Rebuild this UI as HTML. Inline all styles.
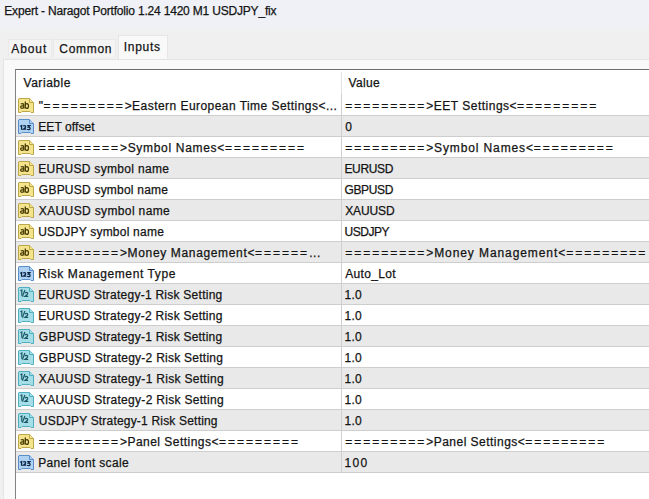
<!DOCTYPE html>
<html><head><meta charset="utf-8"><style>
*{margin:0;padding:0;box-sizing:border-box}
html,body{width:649px;height:499px;overflow:hidden;background:#f0f0f0;font-family:"Liberation Sans",sans-serif;font-size:12px;color:#141414}
.abs{position:absolute}
#title{left:0;top:0;width:649px;height:31px;background:linear-gradient(#eff1f6 0px,#eff1f6 24px,#f1f1f1 31px)}
.tab{position:absolute;top:39px;height:18px;background:#f4f4f4;border:1px solid #e9e9e9;border-bottom:none}
#panel{left:3px;top:59px;width:700px;height:500px;background:#f9f9f9;border:1px solid #e4e4e4}
#inputs{left:118px;top:35px;width:50px;height:24px;background:#f9f9f9;border:1px solid #e6e6e6;border-bottom:none}
#list{left:15px;top:69px;width:700px;height:500px;background:#ffffff;border-left:1px solid #828282;border-top:1px solid #6e6e6e}
.row{position:absolute;left:16px;width:640px;height:22px;background:#e9e9e9;border-top:1px solid #cecece;border-bottom:1px solid #cecece}
.t{position:absolute;line-height:14px;white-space:nowrap;-webkit-text-stroke:0.25px #141414}
.ic{position:absolute;left:18px}
e{letter-spacing:2.000px}
#div{left:341px;width:1px;background:#cfcfcf}
#hdiv{left:341px;top:72px;width:1px;height:22px;background:#e2e2e2}
</style></head><body>
<div id="title" class="abs"></div>
<div class="tab" style="left:8px;width:44px"></div>
<div class="tab" style="left:53px;width:63px"></div>
<div id="panel" class="abs"></div>
<div id="inputs" class="abs"></div>
<div id="list" class="abs"></div>
<span class="t" style="left:4.30px;top:4px;letter-spacing:-0.189px">Expert - Naragot Portfolio 1.24 1420 M1 USDJPY_fix</span>
<span class="t" style="left:11.35px;top:42px;letter-spacing:0.880px">About</span>
<span class="t" style="left:59.28px;top:42px;letter-spacing:0.720px">Common</span>
<span class="t" style="left:123.65px;top:40px;letter-spacing:0.752px">Inputs</span>
<span class="t" style="left:23.49px;top:76px;letter-spacing:0.549px">Variable</span>
<span class="t" style="left:348.49px;top:76px;letter-spacing:0.320px">Value</span>
<svg class="ic" style="top:98px" width="16" height="16" viewBox="0 0 16 16"><path d="M1 0.5H11.5L15.5 4.5V14.5H13L12 13.5H4L3 14.5H0.5V1Z" fill="#f4e48c" stroke="#bda64a"/><path d="M11.5 0.5V4.5H15.5" fill="#f4e48c" stroke="#bda64a"/><g fill="none" stroke="#463900" stroke-width="1.25"><path d="M2.9 6.1Q3.4 5.5 4.4 5.5Q5.8 5.5 5.8 6.9V10.4M5.8 7.9H4.2Q2.6 7.9 2.6 9.1Q2.6 10.3 3.9 10.3Q5.2 10.3 5.8 9.3"/><path d="M7.3 3.6V10.4M7.3 7.2Q7.7 5.5 8.9 5.5Q10.5 5.5 10.5 7.95Q10.5 10.4 8.9 10.4Q7.7 10.4 7.3 8.8"/></g></svg>
<span class="t" style="left:38.86px;top:99px;letter-spacing:0.452px">&quot;<e>=========</e>&gt;Eastern European Time Settings&lt;...</span>
<span class="t" style="left:345.16px;top:99px;letter-spacing:0.501px"><e>=========</e>&gt;EET Settings&lt;<e>=========</e></span>
<div class="row" style="top:115px"></div>
<svg class="ic" style="top:119px" width="16" height="16" viewBox="0 0 16 16"><path d="M1 0.5H11.5L15.5 4.5V14.5H13L12 13.5H4L3 14.5H0.5V1Z" fill="#b0d2f2" stroke="#5a8ecb"/><path d="M11.5 0.5V4.5H15.5" fill="#b0d2f2" stroke="#5a8ecb"/><g fill="none" stroke="#0a2646" stroke-width="1.3"><path d="M2.3 7.4L3.6 6.7V10.8"/><path d="M5.2 7.3Q5.6 6.6 6.5 6.6Q7.7 6.6 7.7 7.7Q7.7 8.6 5.3 10.2H8.2"/><path d="M9.1 6.7H11.8L10.4 8.2Q12.1 8.2 12.1 9.4Q12.1 10.6 10.6 10.6Q9.6 10.6 9.1 10.1"/></g></svg>
<span class="t" style="left:38.16px;top:120px;letter-spacing:0.107px">EET offset</span>
<span class="t" style="left:345.16px;top:120px;letter-spacing:-5.040px">0</span>
<svg class="ic" style="top:140px" width="16" height="16" viewBox="0 0 16 16"><path d="M1 0.5H11.5L15.5 4.5V14.5H13L12 13.5H4L3 14.5H0.5V1Z" fill="#f4e48c" stroke="#bda64a"/><path d="M11.5 0.5V4.5H15.5" fill="#f4e48c" stroke="#bda64a"/><g fill="none" stroke="#463900" stroke-width="1.25"><path d="M2.9 6.1Q3.4 5.5 4.4 5.5Q5.8 5.5 5.8 6.9V10.4M5.8 7.9H4.2Q2.6 7.9 2.6 9.1Q2.6 10.3 3.9 10.3Q5.2 10.3 5.8 9.3"/><path d="M7.3 3.6V10.4M7.3 7.2Q7.7 5.5 8.9 5.5Q10.5 5.5 10.5 7.95Q10.5 10.4 8.9 10.4Q7.7 10.4 7.3 8.8"/></g></svg>
<span class="t" style="left:38.86px;top:141px;letter-spacing:0.692px"><e>=========</e>&gt;Symbol Names&lt;<e>=========</e></span>
<span class="t" style="left:345.16px;top:141px;letter-spacing:0.870px"><e>=========</e>&gt;Symbol Names&lt;<e>=========</e></span>
<div class="row" style="top:157px"></div>
<svg class="ic" style="top:161px" width="16" height="16" viewBox="0 0 16 16"><path d="M1 0.5H11.5L15.5 4.5V14.5H13L12 13.5H4L3 14.5H0.5V1Z" fill="#f4e48c" stroke="#bda64a"/><path d="M11.5 0.5V4.5H15.5" fill="#f4e48c" stroke="#bda64a"/><g fill="none" stroke="#463900" stroke-width="1.25"><path d="M2.9 6.1Q3.4 5.5 4.4 5.5Q5.8 5.5 5.8 6.9V10.4M5.8 7.9H4.2Q2.6 7.9 2.6 9.1Q2.6 10.3 3.9 10.3Q5.2 10.3 5.8 9.3"/><path d="M7.3 3.6V10.4M7.3 7.2Q7.7 5.5 8.9 5.5Q10.5 5.5 10.5 7.95Q10.5 10.4 8.9 10.4Q7.7 10.4 7.3 8.8"/></g></svg>
<span class="t" style="left:38.16px;top:162px;letter-spacing:0.315px">EURUSD symbol name</span>
<span class="t" style="left:344.46px;top:162px;letter-spacing:-0.336px">EURUSD</span>
<svg class="ic" style="top:182px" width="16" height="16" viewBox="0 0 16 16"><path d="M1 0.5H11.5L15.5 4.5V14.5H13L12 13.5H4L3 14.5H0.5V1Z" fill="#f4e48c" stroke="#bda64a"/><path d="M11.5 0.5V4.5H15.5" fill="#f4e48c" stroke="#bda64a"/><g fill="none" stroke="#463900" stroke-width="1.25"><path d="M2.9 6.1Q3.4 5.5 4.4 5.5Q5.8 5.5 5.8 6.9V10.4M5.8 7.9H4.2Q2.6 7.9 2.6 9.1Q2.6 10.3 3.9 10.3Q5.2 10.3 5.8 9.3"/><path d="M7.3 3.6V10.4M7.3 7.2Q7.7 5.5 8.9 5.5Q10.5 5.5 10.5 7.95Q10.5 10.4 8.9 10.4Q7.7 10.4 7.3 8.8"/></g></svg>
<span class="t" style="left:38.86px;top:183px;letter-spacing:0.221px">GBPUSD symbol name</span>
<span class="t" style="left:344.46px;top:183px;letter-spacing:-0.336px">GBPUSD</span>
<div class="row" style="top:199px"></div>
<svg class="ic" style="top:203px" width="16" height="16" viewBox="0 0 16 16"><path d="M1 0.5H11.5L15.5 4.5V14.5H13L12 13.5H4L3 14.5H0.5V1Z" fill="#f4e48c" stroke="#bda64a"/><path d="M11.5 0.5V4.5H15.5" fill="#f4e48c" stroke="#bda64a"/><g fill="none" stroke="#463900" stroke-width="1.25"><path d="M2.9 6.1Q3.4 5.5 4.4 5.5Q5.8 5.5 5.8 6.9V10.4M5.8 7.9H4.2Q2.6 7.9 2.6 9.1Q2.6 10.3 3.9 10.3Q5.2 10.3 5.8 9.3"/><path d="M7.3 3.6V10.4M7.3 7.2Q7.7 5.5 8.9 5.5Q10.5 5.5 10.5 7.95Q10.5 10.4 8.9 10.4Q7.7 10.4 7.3 8.8"/></g></svg>
<span class="t" style="left:38.86px;top:204px;letter-spacing:0.362px">XAUUSD symbol name</span>
<span class="t" style="left:345.16px;top:204px;letter-spacing:-0.096px">XAUUSD</span>
<svg class="ic" style="top:224px" width="16" height="16" viewBox="0 0 16 16"><path d="M1 0.5H11.5L15.5 4.5V14.5H13L12 13.5H4L3 14.5H0.5V1Z" fill="#f4e48c" stroke="#bda64a"/><path d="M11.5 0.5V4.5H15.5" fill="#f4e48c" stroke="#bda64a"/><g fill="none" stroke="#463900" stroke-width="1.25"><path d="M2.9 6.1Q3.4 5.5 4.4 5.5Q5.8 5.5 5.8 6.9V10.4M5.8 7.9H4.2Q2.6 7.9 2.6 9.1Q2.6 10.3 3.9 10.3Q5.2 10.3 5.8 9.3"/><path d="M7.3 3.6V10.4M7.3 7.2Q7.7 5.5 8.9 5.5Q10.5 5.5 10.5 7.95Q10.5 10.4 8.9 10.4Q7.7 10.4 7.3 8.8"/></g></svg>
<span class="t" style="left:38.16px;top:225px;letter-spacing:0.226px">USDJPY symbol name</span>
<span class="t" style="left:344.46px;top:225px;letter-spacing:-0.448px">USDJPY</span>
<div class="row" style="top:241px"></div>
<svg class="ic" style="top:245px" width="16" height="16" viewBox="0 0 16 16"><path d="M1 0.5H11.5L15.5 4.5V14.5H13L12 13.5H4L3 14.5H0.5V1Z" fill="#f4e48c" stroke="#bda64a"/><path d="M11.5 0.5V4.5H15.5" fill="#f4e48c" stroke="#bda64a"/><g fill="none" stroke="#463900" stroke-width="1.25"><path d="M2.9 6.1Q3.4 5.5 4.4 5.5Q5.8 5.5 5.8 6.9V10.4M5.8 7.9H4.2Q2.6 7.9 2.6 9.1Q2.6 10.3 3.9 10.3Q5.2 10.3 5.8 9.3"/><path d="M7.3 3.6V10.4M7.3 7.2Q7.7 5.5 8.9 5.5Q10.5 5.5 10.5 7.95Q10.5 10.4 8.9 10.4Q7.7 10.4 7.3 8.8"/></g></svg>
<span class="t" style="left:38.86px;top:246px;letter-spacing:0.651px"><e>=========</e>&gt;Money Management&lt;<e>======</e>...</span>
<span class="t" style="left:345.16px;top:246px;letter-spacing:0.915px"><e>=========</e>&gt;Money Management&lt;<e>=========</e></span>
<svg class="ic" style="top:266px" width="16" height="16" viewBox="0 0 16 16"><path d="M1 0.5H11.5L15.5 4.5V14.5H13L12 13.5H4L3 14.5H0.5V1Z" fill="#b0d2f2" stroke="#5a8ecb"/><path d="M11.5 0.5V4.5H15.5" fill="#b0d2f2" stroke="#5a8ecb"/><g fill="none" stroke="#0a2646" stroke-width="1.3"><path d="M2.3 7.4L3.6 6.7V10.8"/><path d="M5.2 7.3Q5.6 6.6 6.5 6.6Q7.7 6.6 7.7 7.7Q7.7 8.6 5.3 10.2H8.2"/><path d="M9.1 6.7H11.8L10.4 8.2Q12.1 8.2 12.1 9.4Q12.1 10.6 10.6 10.6Q9.6 10.6 9.1 10.1"/></g></svg>
<span class="t" style="left:38.16px;top:267px;letter-spacing:0.598px">Risk Management Type</span>
<span class="t" style="left:345.16px;top:267px;letter-spacing:0.343px">Auto_Lot</span>
<div class="row" style="top:283px"></div>
<svg class="ic" style="top:287px" width="16" height="16" viewBox="0 0 16 16"><path d="M1 0.5H11.5L15.5 4.5V14.5H13L12 13.5H4L3 14.5H0.5V1Z" fill="#a6dee8" stroke="#4eafc1"/><path d="M11.5 0.5V4.5H15.5" fill="#a6dee8" stroke="#4eafc1"/><g fill="none" stroke="#1a5867" stroke-width="1.2"><path d="M2.4 3.8L3.8 3V8.8"/><path d="M4.4 9.6L6.9 3"/><path d="M7 6.2Q7.4 5.4 8.4 5.4Q9.8 5.4 9.8 6.6Q9.8 7.5 7.1 9.3H10.2"/></g></svg>
<span class="t" style="left:38.16px;top:288px;letter-spacing:0.254px">EURUSD Strategy-1 Risk Setting</span>
<span class="t" style="left:344.46px;top:288px;letter-spacing:0.320px">1.0</span>
<svg class="ic" style="top:308px" width="16" height="16" viewBox="0 0 16 16"><path d="M1 0.5H11.5L15.5 4.5V14.5H13L12 13.5H4L3 14.5H0.5V1Z" fill="#a6dee8" stroke="#4eafc1"/><path d="M11.5 0.5V4.5H15.5" fill="#a6dee8" stroke="#4eafc1"/><g fill="none" stroke="#1a5867" stroke-width="1.2"><path d="M2.4 3.8L3.8 3V8.8"/><path d="M4.4 9.6L6.9 3"/><path d="M7 6.2Q7.4 5.4 8.4 5.4Q9.8 5.4 9.8 6.6Q9.8 7.5 7.1 9.3H10.2"/></g></svg>
<span class="t" style="left:38.16px;top:309px;letter-spacing:0.259px">EURUSD Strategy-2 Risk Setting</span>
<span class="t" style="left:344.46px;top:309px;letter-spacing:0.320px">1.0</span>
<div class="row" style="top:325px"></div>
<svg class="ic" style="top:329px" width="16" height="16" viewBox="0 0 16 16"><path d="M1 0.5H11.5L15.5 4.5V14.5H13L12 13.5H4L3 14.5H0.5V1Z" fill="#a6dee8" stroke="#4eafc1"/><path d="M11.5 0.5V4.5H15.5" fill="#a6dee8" stroke="#4eafc1"/><g fill="none" stroke="#1a5867" stroke-width="1.2"><path d="M2.4 3.8L3.8 3V8.8"/><path d="M4.4 9.6L6.9 3"/><path d="M7 6.2Q7.4 5.4 8.4 5.4Q9.8 5.4 9.8 6.6Q9.8 7.5 7.1 9.3H10.2"/></g></svg>
<span class="t" style="left:38.86px;top:330px;letter-spacing:0.226px">GBPUSD Strategy-1 Risk Setting</span>
<span class="t" style="left:344.46px;top:330px;letter-spacing:0.320px">1.0</span>
<svg class="ic" style="top:350px" width="16" height="16" viewBox="0 0 16 16"><path d="M1 0.5H11.5L15.5 4.5V14.5H13L12 13.5H4L3 14.5H0.5V1Z" fill="#a6dee8" stroke="#4eafc1"/><path d="M11.5 0.5V4.5H15.5" fill="#a6dee8" stroke="#4eafc1"/><g fill="none" stroke="#1a5867" stroke-width="1.2"><path d="M2.4 3.8L3.8 3V8.8"/><path d="M4.4 9.6L6.9 3"/><path d="M7 6.2Q7.4 5.4 8.4 5.4Q9.8 5.4 9.8 6.6Q9.8 7.5 7.1 9.3H10.2"/></g></svg>
<span class="t" style="left:38.86px;top:351px;letter-spacing:0.254px">GBPUSD Strategy-2 Risk Setting</span>
<span class="t" style="left:344.46px;top:351px;letter-spacing:0.320px">1.0</span>
<div class="row" style="top:367px"></div>
<svg class="ic" style="top:371px" width="16" height="16" viewBox="0 0 16 16"><path d="M1 0.5H11.5L15.5 4.5V14.5H13L12 13.5H4L3 14.5H0.5V1Z" fill="#a6dee8" stroke="#4eafc1"/><path d="M11.5 0.5V4.5H15.5" fill="#a6dee8" stroke="#4eafc1"/><g fill="none" stroke="#1a5867" stroke-width="1.2"><path d="M2.4 3.8L3.8 3V8.8"/><path d="M4.4 9.6L6.9 3"/><path d="M7 6.2Q7.4 5.4 8.4 5.4Q9.8 5.4 9.8 6.6Q9.8 7.5 7.1 9.3H10.2"/></g></svg>
<span class="t" style="left:38.86px;top:372px;letter-spacing:0.298px">XAUUSD Strategy-1 Risk Setting</span>
<span class="t" style="left:344.46px;top:372px;letter-spacing:0.320px">1.0</span>
<svg class="ic" style="top:392px" width="16" height="16" viewBox="0 0 16 16"><path d="M1 0.5H11.5L15.5 4.5V14.5H13L12 13.5H4L3 14.5H0.5V1Z" fill="#a6dee8" stroke="#4eafc1"/><path d="M11.5 0.5V4.5H15.5" fill="#a6dee8" stroke="#4eafc1"/><g fill="none" stroke="#1a5867" stroke-width="1.2"><path d="M2.4 3.8L3.8 3V8.8"/><path d="M4.4 9.6L6.9 3"/><path d="M7 6.2Q7.4 5.4 8.4 5.4Q9.8 5.4 9.8 6.6Q9.8 7.5 7.1 9.3H10.2"/></g></svg>
<span class="t" style="left:38.86px;top:393px;letter-spacing:0.298px">XAUUSD Strategy-2 Risk Setting</span>
<span class="t" style="left:344.46px;top:393px;letter-spacing:0.320px">1.0</span>
<div class="row" style="top:409px"></div>
<svg class="ic" style="top:413px" width="16" height="16" viewBox="0 0 16 16"><path d="M1 0.5H11.5L15.5 4.5V14.5H13L12 13.5H4L3 14.5H0.5V1Z" fill="#a6dee8" stroke="#4eafc1"/><path d="M11.5 0.5V4.5H15.5" fill="#a6dee8" stroke="#4eafc1"/><g fill="none" stroke="#1a5867" stroke-width="1.2"><path d="M2.4 3.8L3.8 3V8.8"/><path d="M4.4 9.6L6.9 3"/><path d="M7 6.2Q7.4 5.4 8.4 5.4Q9.8 5.4 9.8 6.6Q9.8 7.5 7.1 9.3H10.2"/></g></svg>
<span class="t" style="left:38.86px;top:414px;letter-spacing:0.190px">USDJPY Strategy-1 Risk Setting</span>
<span class="t" style="left:344.46px;top:414px;letter-spacing:0.320px">1.0</span>
<svg class="ic" style="top:434px" width="16" height="16" viewBox="0 0 16 16"><path d="M1 0.5H11.5L15.5 4.5V14.5H13L12 13.5H4L3 14.5H0.5V1Z" fill="#f4e48c" stroke="#bda64a"/><path d="M11.5 0.5V4.5H15.5" fill="#f4e48c" stroke="#bda64a"/><g fill="none" stroke="#463900" stroke-width="1.25"><path d="M2.9 6.1Q3.4 5.5 4.4 5.5Q5.8 5.5 5.8 6.9V10.4M5.8 7.9H4.2Q2.6 7.9 2.6 9.1Q2.6 10.3 3.9 10.3Q5.2 10.3 5.8 9.3"/><path d="M7.3 3.6V10.4M7.3 7.2Q7.7 5.5 8.9 5.5Q10.5 5.5 10.5 7.95Q10.5 10.4 8.9 10.4Q7.7 10.4 7.3 8.8"/></g></svg>
<span class="t" style="left:38.86px;top:435px;letter-spacing:0.473px"><e>=========</e>&gt;Panel Settings&lt;<e>=========</e></span>
<span class="t" style="left:345.16px;top:435px;letter-spacing:0.477px"><e>=========</e>&gt;Panel Settings&lt;<e>=========</e></span>
<div class="row" style="top:451px"></div>
<svg class="ic" style="top:455px" width="16" height="16" viewBox="0 0 16 16"><path d="M1 0.5H11.5L15.5 4.5V14.5H13L12 13.5H4L3 14.5H0.5V1Z" fill="#b0d2f2" stroke="#5a8ecb"/><path d="M11.5 0.5V4.5H15.5" fill="#b0d2f2" stroke="#5a8ecb"/><g fill="none" stroke="#0a2646" stroke-width="1.3"><path d="M2.3 7.4L3.6 6.7V10.8"/><path d="M5.2 7.3Q5.6 6.6 6.5 6.6Q7.7 6.6 7.7 7.7Q7.7 8.6 5.3 10.2H8.2"/><path d="M9.1 6.7H11.8L10.4 8.2Q12.1 8.2 12.1 9.4Q12.1 10.6 10.6 10.6Q9.6 10.6 9.1 10.1"/></g></svg>
<span class="t" style="left:38.16px;top:456px;letter-spacing:0.336px">Panel font scale</span>
<span class="t" style="left:344.46px;top:456px;letter-spacing:1.400px">100</span>
<div id="hdiv" class="abs"></div><div id="div" class="abs" style="top:94px;height:379px"></div>
</body></html>
